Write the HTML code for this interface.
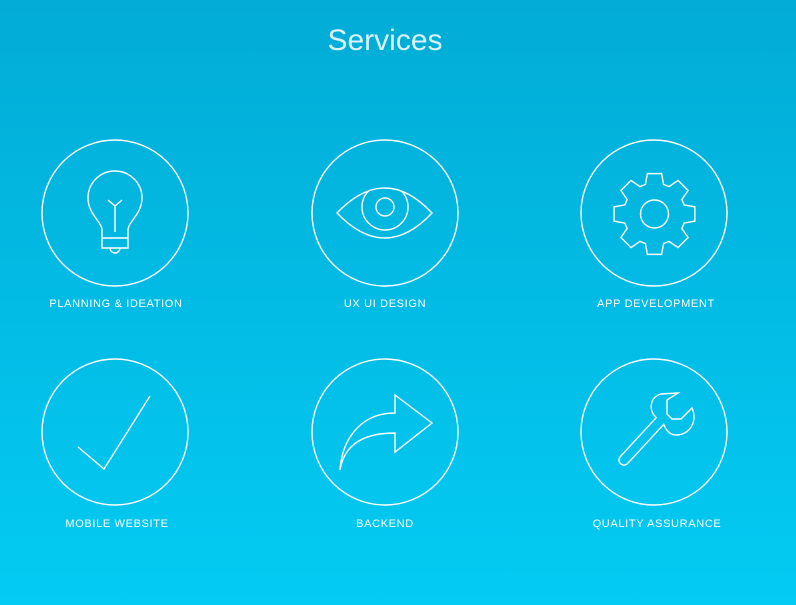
<!DOCTYPE html>
<html><head><meta charset="utf-8"><style>
html,body{margin:0;padding:0;width:796px;height:605px;overflow:hidden;background:linear-gradient(#02acd6,#03cbf3);}
svg{display:block}
text{font-family:"Liberation Sans",sans-serif;fill:#fff;}
.l{font-size:11px;letter-spacing:0.65px;text-anchor:middle;}
</style></head><body>
<svg width="796" height="605" viewBox="0 0 796 605">
<defs><clipPath id="eye"><path d="M337,213 Q385,163 432,213 Q385,263 337,213Z"/></clipPath></defs>
<text x="385" y="50" font-size="30" text-anchor="middle" fill-opacity="0.85">Services</text>
<g fill="none" stroke="#fff" stroke-width="1.4" stroke-linejoin="miter">
<circle cx="115" cy="213" r="73"/>
<circle cx="385" cy="213" r="73"/>
<circle cx="654" cy="213" r="73"/>
<circle cx="115" cy="432" r="73"/>
<circle cx="385" cy="432" r="73"/>
<circle cx="654" cy="432" r="73"/>
<path d="M102,248 L102,230 C102,222 88,214 88,198 A27,27 0 1 1 142,198 C142,214 128,222 128,230 L128,248 Z"/>
<line x1="102" y1="238" x2="128" y2="238"/>
<path d="M110,248 A5,5 0 0 0 120,248"/>
<path d="M115,232 L115,206 L108,200 M115,206 L122,200"/>
<path d="M337,213 Q385,163 432,213 Q385,263 337,213Z"/>
<circle cx="385" cy="207" r="23" clip-path="url(#eye)"/>
<circle cx="385" cy="207" r="9"/>
<polygon transform="translate(654.5,214)" points="29.64,-9.06 40.38,-7.12 40.38,7.12 29.64,9.06 27.37,14.55 33.59,23.52 23.52,33.59 14.55,27.37 9.06,29.64 7.12,40.38 -7.12,40.38 -9.06,29.64 -14.55,27.37 -23.52,33.59 -33.59,23.52 -27.37,14.55 -29.64,9.06 -40.38,7.12 -40.38,-7.12 -29.64,-9.06 -27.37,-14.55 -33.59,-23.52 -23.52,-33.59 -14.55,-27.37 -9.06,-29.64 -7.12,-40.38 7.12,-40.38 9.06,-29.64 14.55,-27.37 23.52,-33.59 33.59,-23.52 27.37,-14.55"/>
<circle cx="654.5" cy="214" r="14"/>
<polyline points="78,447 104,469 150,396"/>
<path d="M340,470 C342,440 360,413 395,413 L395,395 L432,423 L395,452 L395,433 C370,433 345,440 340,470 Z"/>
<path d="M620.3,456.6 L656.3,417.6 C648,410 650,397 661,394 L678,393 L667,400 L667,414 L672,419 L681,419 L692,408 C698,421 690,435 676,435 C670,435 666,430 663.7,424.4 L627.7,463.4 A5,5 0 0 1 620.3,456.6 Z"/>
</g>
<text class="l" x="116" y="307">PLANNING &amp; IDEATION</text>
<text class="l" x="385" y="307">UX UI DESIGN</text>
<text class="l" x="656" y="307">APP DEVELOPMENT</text>
<text class="l" x="117" y="527">MOBILE WEBSITE</text>
<text class="l" x="385" y="527">BACKEND</text>
<text class="l" x="657" y="527">QUALITY ASSURANCE</text>
</svg>
</body></html>
